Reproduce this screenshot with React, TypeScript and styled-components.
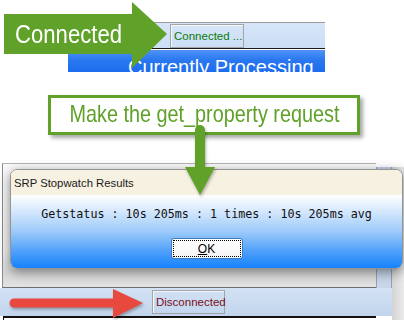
import styled, { createGlobalStyle } from 'styled-components';

const GlobalStyle = createGlobalStyle`
  html, body {
    margin: 0;
    padding: 0;
    background: #ffffff;
  }
  body {
    font-family: "Liberation Sans", Arial, sans-serif;
  }
`;

const ANNOT_GREEN = '#5fa129';
const ANNOT_RED = '#e8493e';

const Page = styled.div`
  position: relative;
  width: 404px;
  height: 320px;
  overflow: hidden;
  background: #ffffff;
`;

// top screenshot: status strip + processing bar
const TopShot = styled.div`
  width: 257px;
  margin-left: 68px;
  padding-top: 22px;
`;

const StatusStrip = styled.div<{ $pad: number }>`
  box-sizing: border-box;
  height: 26px;
  display: flex;
  align-items: center;
  padding-left: ${({ $pad }) => $pad}px;
  border-top: 1px solid #9a9a9a;
  background: linear-gradient(180deg, #d6e6f8 0%, #cbdef5 100%);
`;

const StatusPanel = styled.div<{ $color: string; $w: number }>`
  box-sizing: border-box;
  width: ${({ $w }) => $w}px;
  height: 24px;
  display: flex;
  align-items: center;
  padding-left: 3px;
  border: 1px solid #a4a4a4;
  box-shadow: inset 1px 1px 0 #f4f8fd;
  font-size: 11.5px;
  color: ${({ $color }) => $color};
  white-space: nowrap;
`;

const BarDivider = styled.div`
  height: 1px;
  border-top: 1px solid #1a1a1a;
  background: #ffffff;
`;

const ProcessingBar = styled.div`
  height: 22px;
  overflow: hidden;
  padding-left: 60px;
  background: linear-gradient(180deg, #4f93f6 0%, #2a78f0 45%, #1c6cee 100%);
  color: #ffffff;
  font-size: 20px;
  line-height: 23px;
  padding-top: 6px;
  box-sizing: border-box;
  white-space: nowrap;
`;

// callout
const Callout = styled.div`
  box-sizing: border-box;
  width: 312px;
  height: 40px;
  margin: 23px 0 0 48px;
  border: 3px solid ${ANNOT_GREEN};
  background: #ffffff;
  box-shadow: 3px 3px 4px rgba(0, 0, 0, 0.35);
  display: flex;
  align-items: center;
  justify-content: center;
  padding-bottom: 2px;
  overflow: hidden;
`;

const AnnotLabel = styled.span<{ $size: number; $squeeze: number; $color: string }>`
  display: inline-block;
  font-family: "Liberation Sans", Arial, sans-serif;
  font-size: ${({ $size }) => $size}px;
  line-height: 1;
  color: ${({ $color }) => $color};
  white-space: nowrap;
  transform: scaleX(${({ $squeeze }) => $squeeze});
`;

// background window
const BackWindow = styled.div`
  margin-top: 28px;
  height: 157px;
  display: grid;
  grid-template-columns: 392px 12px;
`;

const BackMain = styled.div`
  display: flex;
  flex-direction: column;
`;

const ContentRow = styled.div`
  height: 125px;
  display: flex;
`;

const ContentPanel = styled.div`
  box-sizing: border-box;
  width: 374px;
  margin-left: 2px;
  border-left: 1px solid #8a8a8a;
  border-top: 1px solid #b4b4b4;
  border-bottom: 1px solid #6f6f6f;
  background: linear-gradient(180deg, #fafafa 0%, #f0f0f0 70%, #d8d8d8 88%, #e2e2e2 100%);
`;

const SideColumn = styled.div`
  box-sizing: border-box;
  width: 16px;
  margin-top: 4px;
  border-left: 1px solid #92a3ba;
  border-right: 1px solid #92a3ba;
  background: linear-gradient(180deg, #c2d1e4 0%, #c8d6e8 100%);
`;

const BottomStrip = styled.div`
  box-sizing: border-box;
  height: 28px;
  display: flex;
  align-items: center;
  padding-left: 152px;
  background: linear-gradient(180deg, #d3e2f4 0%, #c2d5ed 100%);
`;

const BottomBox = styled.div`
  box-sizing: border-box;
  width: 373px;
  height: 4px;
  margin-left: 3px;
  border-top: 2px solid #111111;
  border-left: 1px solid #111111;
  background: #ffffff;
`;

const BackRight = styled.div`
  margin-top: 4px;
  background: linear-gradient(90deg, #d4d4d4 0%, #ebebeb 100%);
`;

// dialog window floating over the back window
const Dialog = styled.div`
  position: absolute;
  left: 10px;
  top: 169px;
  width: 393px;
  height: 100px;
  box-sizing: border-box;
  border: 1px solid #959595;
  border-radius: 7px;
  overflow: hidden;
  display: flex;
  flex-direction: column;
  box-shadow: 0 3px 12px rgba(0, 0, 0, 0.45);
`;

const DialogTitle = styled.div`
  height: 25px;
  flex: none;
  display: flex;
  align-items: center;
  padding-left: 3px;
  background: #f7f1e1;
  color: #1b1b1b;
  font-size: 11.3px;
`;

const DialogBody = styled.div`
  flex: 1;
  display: flex;
  flex-direction: column;
  align-items: center;
  padding-top: 12px;
  background: linear-gradient(180deg, #ffffff 0%, #d6e8fd 22%, #9ccaf9 50%, #55a3fa 75%, #1682fb 100%);
`;

const ResultLine = styled.div`
  font-family: "DejaVu Sans Mono", "Liberation Mono", monospace;
  font-size: 11.7px;
  line-height: 14px;
  color: #101010;
  white-space: pre;
`;

const OkButton = styled.button`
  box-sizing: border-box;
  width: 72px;
  height: 21px;
  margin-top: 17px;
  padding: 0;
  border: 1px solid #3e7cc2;
  border-radius: 3px;
  background: linear-gradient(180deg, #ffffff 0%, #f3f3f3 100%);
  outline: 1px dotted #000000;
  outline-offset: -3px;
  font-family: "Liberation Sans", Arial, sans-serif;
  font-size: 12px;
  color: #000000;
  u {
    text-decoration: underline;
  }
`;

// annotation arrows (drawings laid over the screenshots)
const Overlay = styled.div<{ $x: number; $y: number }>`
  position: absolute;
  left: ${({ $x }) => $x}px;
  top: ${({ $y }) => $y}px;
  line-height: 0;
`;

const ArrowSvg = styled.svg<{ $shadow?: boolean }>`
  display: block;
  ${({ $shadow }) => ($shadow ? 'filter: drop-shadow(1px 2px 1.5px rgba(0,0,0,0.3));' : '')}
`;

const ArrowText = styled.div`
  position: absolute;
  left: 11px;
  top: 20px;
  line-height: 1;
`;

export default function App() {
  return (
    <>
      <GlobalStyle />
      <Page>
        <TopShot>
          <StatusStrip $pad={102}>
            <StatusPanel $color="#0b7a0b" $w={74}>Connected ...</StatusPanel>
          </StatusStrip>
          <BarDivider />
          <ProcessingBar>Currently Processing</ProcessingBar>
        </TopShot>

        <Callout>
          <AnnotLabel $size={24} $squeeze={0.826} $color={ANNOT_GREEN}>
            Make the get_property request
          </AnnotLabel>
        </Callout>

        <BackWindow>
          <BackMain>
            <ContentRow>
              <ContentPanel />
              <SideColumn />
            </ContentRow>
            <BottomStrip>
              <StatusPanel $color="#7b0d1c" $w={73}>Disconnected</StatusPanel>
            </BottomStrip>
            <BottomBox />
          </BackMain>
          <BackRight />
        </BackWindow>

        <Dialog>
          <DialogTitle>SRP Stopwatch Results</DialogTitle>
          <DialogBody>
            <ResultLine>Getstatus : 10s 205ms : 1 times : 10s 205ms avg</ResultLine>
            <OkButton>
              <u>O</u>K
            </OkButton>
          </DialogBody>
        </Dialog>

        {/* "Connected" green arrow */}
        <Overlay $x={4} $y={2}>
          <ArrowSvg width="165" height="68" viewBox="0 0 165 68">
            <rect x="0" y="12" width="129" height="40" fill={ANNOT_GREEN} />
            <polygon points="128,0 163,32 128,66" fill={ANNOT_GREEN} />
          </ArrowSvg>
          <ArrowText>
            <AnnotLabel $size={25} $squeeze={0.885} $color="#ffffff" style={{ transformOrigin: 'left' }}>
              Connected
            </AnnotLabel>
          </ArrowText>
        </Overlay>

        {/* down arrow from the callout */}
        <Overlay $x={184} $y={123}>
          <ArrowSvg width="32" height="74" viewBox="0 0 32 74" $shadow>
            <line x1="16" y1="7" x2="16" y2="48" stroke={ANNOT_GREEN} strokeWidth="10" strokeLinecap="round" />
            <polygon points="1,44 31,44 16,72" fill={ANNOT_GREEN} />
          </ArrowSvg>
        </Overlay>

        {/* red arrow to Disconnected */}
        <Overlay $x={9} $y={287}>
          <ArrowSvg width="137" height="33" viewBox="0 0 137 33" $shadow>
            <line x1="5" y1="16" x2="108" y2="16" stroke={ANNOT_RED} strokeWidth="9" strokeLinecap="round" />
            <polygon points="104,2 134,16 104,31" fill={ANNOT_RED} />
          </ArrowSvg>
        </Overlay>
      </Page>
    </>
  );
}
